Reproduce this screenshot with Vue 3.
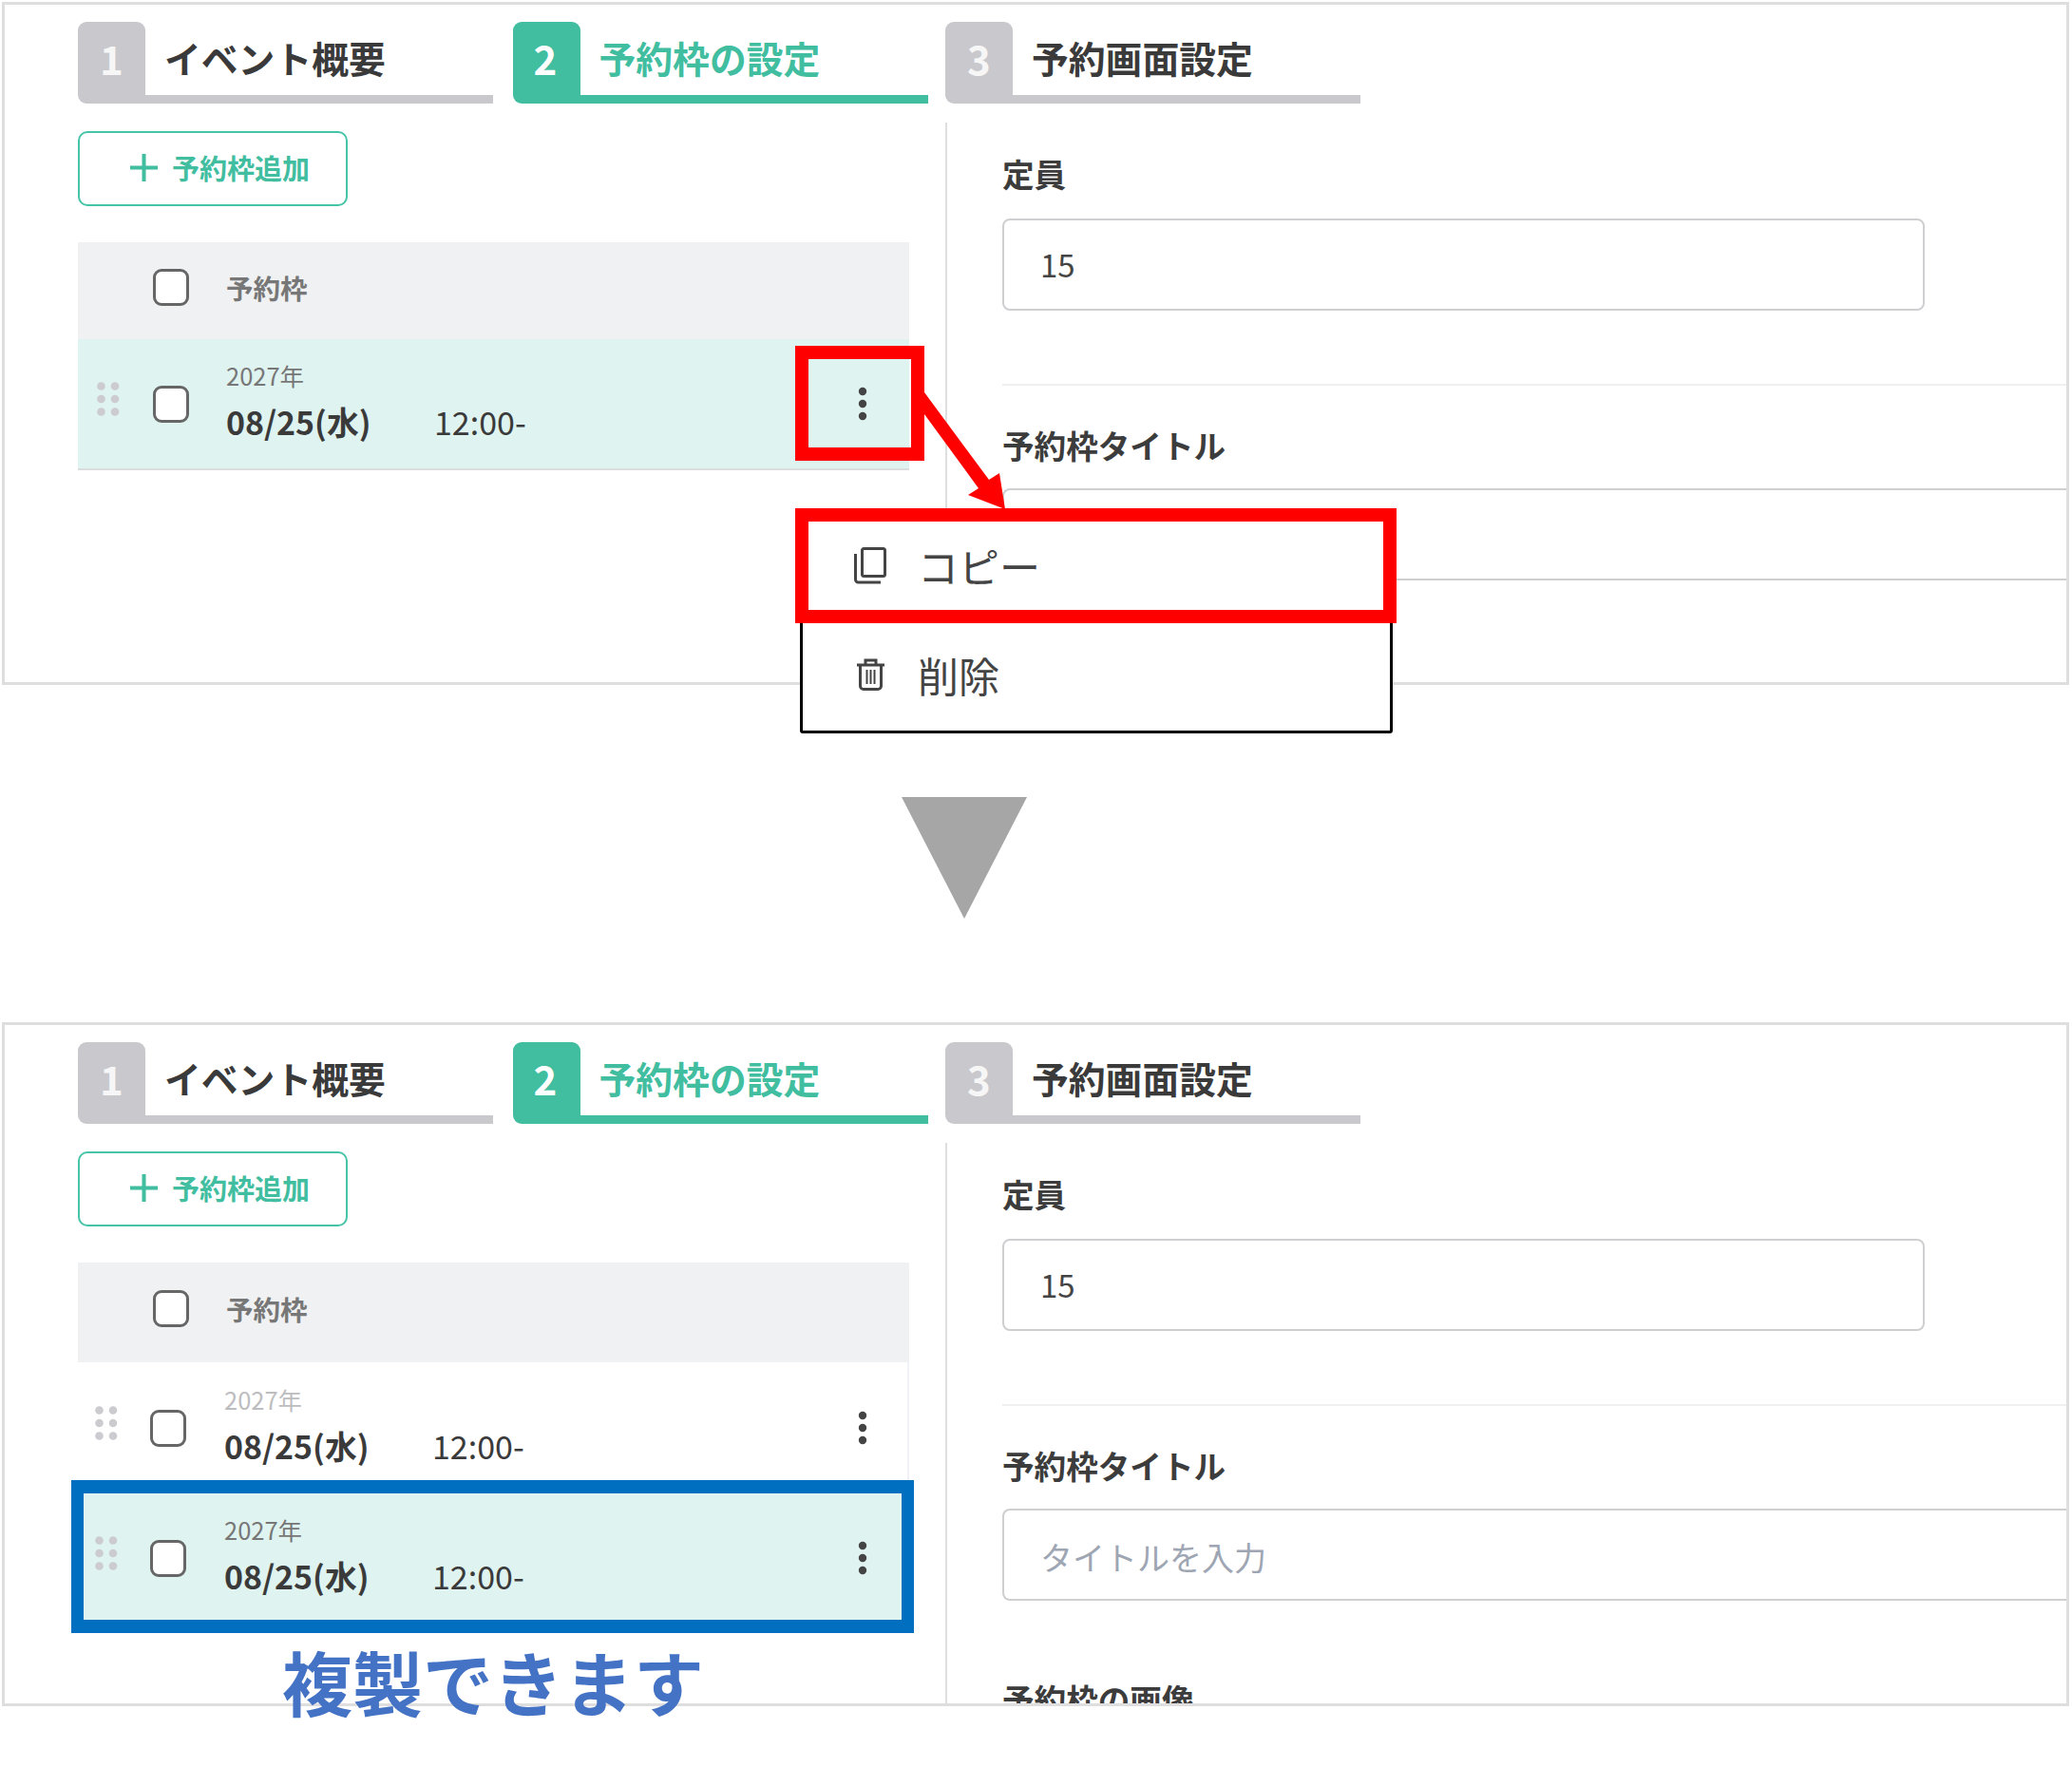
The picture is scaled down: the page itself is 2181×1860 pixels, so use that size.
<script setup>
const tabs = [
  { no: 1, title: 'イベント概要' },
  { no: 2, title: '予約枠の設定', active: true },
  { no: 3, title: '予約画面設定' }
]
const panels = [
  { id: 'before', tall: false, rows: [{ id: 'a', selected: true, faded: false }] },
  { id: 'after', tall: true, rows: [{ id: 'b', selected: false, faded: true }, { id: 'c', selected: true, faded: false }] }
]
const dots = [[4.500, 4.500], [19, 4.500], [4.500, 18], [19, 18], [4.500, 31.500], [19, 31.500]]
</script>

<template>
  <div class="page">
    <section v-for="panel in panels" :key="panel.id" class="panel" :class="{ tall: panel.tall }">
      <nav class="tabs">
        <div v-for="tab in tabs" :key="tab.no" class="tab" :class="{ active: tab.active }">
          <span class="num">{{ tab.no }}</span>
          <span class="tab-title">{{ tab.title }}</span>
        </div>
      </nav>
      <div class="body">
        <div class="left">
          <button class="add" type="button">
            <svg class="plus" width="29" height="29" viewBox="0 0 29 29"><path d="M14.500 0v29M0 14.500h29" stroke="#41bda0" stroke-width="4" fill="none" /></svg>
            <span>予約枠追加</span>
          </button>
          <div class="thead" :class="{ tall: panel.tall }">
            <span class="check"></span>
            <span class="thead-label">予約枠</span>
          </div>
          <div
            v-for="row in panel.rows"
            :key="row.id"
            class="row"
            :class="{ selected: row.selected, shifted: panel.tall, plain: !row.selected }"
          >
            <svg class="handle" width="24" height="36" viewBox="0 0 24 36">
              <circle v-for="(d, i) in dots" :key="i" :cx="d[0]" :cy="d[1]" r="4.300" fill="#cbcbd0" />
            </svg>
            <span class="check"></span>
            <div class="when">
              <div class="year" :class="{ faded: row.faded }">2027年</div>
              <div class="slot"><b class="date">08/25(水)</b><span class="time">12:00-</span></div>
            </div>
            <svg class="kebab" width="10" height="36" viewBox="0 0 10 36">
              <circle cx="5" cy="5" r="4.200" fill="#444" /><circle cx="5" cy="18" r="4.200" fill="#444" /><circle cx="5" cy="31" r="4.200" fill="#444" />
            </svg>
          </div>
        </div>
        <div class="right">
          <h3 class="label">定員</h3>
          <div class="input short">15</div>
          <hr class="rule" />
          <h3 class="label second">予約枠タイトル</h3>
          <div class="input wide placeholder">タイトルを入力</div>
          <h3 v-if="panel.tall" class="label third">予約枠の画像</h3>
        </div>
      </div>
    </section>

    <!-- annotations laid over the screenshots -->
    <div class="menu">
      <div class="menu-item copy">
        <svg width="34" height="39" viewBox="0 0 34 39" fill="none" stroke="#444" stroke-width="3">
          <rect x="8.500" y="1.500" width="24" height="29" rx="2" />
          <path d="M1.500 7v27a3 3 0 0 0 3 3H28" />
        </svg>
        <span>コピー</span>
      </div>
      <div class="menu-item del">
        <svg width="29" height="34" viewBox="0 0 29 34" fill="none" stroke="#444" stroke-width="3">
          <path d="M0 7h29M9 7V2h11v5M3.500 7v22a3.500 3.500 0 0 0 3.500 3.500h15a3.500 3.500 0 0 0 3.500-3.500V7" />
          <path d="M10.500 12v15M14.500 12v15M18.500 12v15" stroke-width="2" />
        </svg>
        <span>削除</span>
      </div>
    </div>
    <div class="red-box kebab-box"></div>
    <svg class="arrow" width="100" height="130" viewBox="0 0 100 130">
      <polygon points="0,2 0,25 57,103 46,110 85,125 79,87 68,94" fill="#ff0000" />
    </svg>
    <div class="red-box copy-box"></div>
    <svg class="triangle" width="132" height="128" viewBox="0 0 132 128"><polygon points="0,0 132,0 66,128" fill="#a6a6a6" /></svg>
    <div class="blue-box"></div>
    <div class="caption">複製できます</div>
  </div>
</template>

<style scoped>
.page {
  position: relative;
  width: 2181px;
  height: 1860px;
  padding-top: 2px;
  box-sizing: border-box;
  overflow: hidden;
  background: #fff;
  color: #444;
  font-family: "Noto Sans CJK JP", "Noto Sans", sans-serif;
}
.panel {
  box-sizing: border-box;
  width: 2176px;
  height: 719px;
  margin-left: 2px;
  border: 3px solid #dedede;
  padding: 18px 0 0 77px;
  overflow: hidden;
}
.panel.tall { height: 720px; margin-top: 355px; }

.tabs { display: flex; gap: 19.500px; }
.tab { display: flex; width: 437px; height: 86px; }
.tab.active { margin: 0 -1px 0 1px; }
.num {
  width: 71px;
  flex: none;
  border-radius: 9px 9px 0 9px;
  background: #c8c8cd;
  color: #f6f6f6;
  font-size: 42px;
  font-weight: 700;
  line-height: 75px;
  text-align: center;
}
.tab.active .num { padding-right: 2px; width: 69px; }
.tab-title {
  flex: 1;
  padding-left: 20px;
  border-bottom: 9px solid #c8c8cd;
  color: #3a3a3a;
  font-size: 38.800px;
  font-weight: 700;
  line-height: 75px;
  white-space: nowrap;
}
.tab.active .num { background: #41bda0; color: #fff; }
.tab.active .tab-title { border-color: #41bda0; color: #41bda0; }

.body { display: flex; margin-top: 20px; height: 700px; }
.left { width: 875px; margin-right: 38px; padding-top: 9px; flex: none; }
.add {
  display: flex;
  align-items: center;
  gap: 15px;
  box-sizing: border-box;
  width: 284px;
  height: 79px;
  padding: 0 0 2px 53px;
  border: 2px solid #45c4a7;
  border-radius: 10px;
  background: #fff;
  color: #41bda0;
  font: 700 29px/1 "Noto Sans CJK JP", sans-serif;
  white-space: nowrap;
}
.plus { flex: none; }
.thead {
  display: flex;
  align-items: center;
  box-sizing: border-box;
  height: 102px;
  margin-top: 38px;
  padding: 0 0 7px 79px;
  background: #f0f1f3;
}
.thead.tall { height: 105px; padding-bottom: 9px; }
.thead-label { margin-left: 39px; color: #777; font-size: 28.500px; font-weight: 700; }
.check {
  flex: none;
  box-sizing: border-box;
  width: 38px;
  height: 39px;
  border: 3px solid #666;
  border-radius: 9px;
  background: #fff;
}
.row {
  display: flex;
  align-items: center;
  box-sizing: border-box;
  height: 138px;
  padding: 0 44px 0 20px;
  border-bottom: 2px solid #dcdcde;
}
.row.selected { background: #dff3f0; }
.row.plain { height: 138px; padding-right: 42px; border-bottom: 0; border-right: 2px solid #f0f2f5; }
.row.shifted { padding-left: 18px; }
.handle { flex: none; margin: -11px 35px 0 0; }
.row.shifted .handle { margin-right: 34px; }
.when { margin: -12px 0 0 39px; white-space: nowrap; }
.row.shifted .when { margin-left: 40px; }
.year { color: #777; font-size: 25.500px; line-height: 38px; }
.year.faded { color: #bdbdc0; }
.slot { display: flex; align-items: baseline; margin-top: 11px; line-height: 38px; color: #3a3a3a; }
.date { width: 219px; font-size: 33.900px; font-weight: 700; }
.time { font-size: 34px; }
.kebab { flex: none; margin-left: auto; }

.right { flex: 1; padding: 34px 0 0 58px; border-left: 2px solid #dedede; }
.label { margin: 0; color: #3c3c3c; font-size: 33.600px; font-weight: 700; line-height: 40px; white-space: nowrap; }
.second { margin-top: 43px; }
.third { margin-top: 84px; }
.input {
  box-sizing: border-box;
  height: 97px;
  margin-top: 27px;
  padding-left: 38px;
  border: 2px solid #cfcfd2;
  border-radius: 8px;
  font-size: 33px;
  line-height: 93px;
  white-space: nowrap;
}
.short { width: 971px; }
.wide { margin-top: 25px; border-right: 0; border-radius: 8px 0 0 8px; }
.placeholder { color: #9ea5b3; font-size: 34px; line-height: 97px; }
.rule { height: 2px; margin: 77px 0 0; border: 0; background: #f0f0f0; }

.menu {
  position: absolute;
  left: 842px;
  top: 540px;
  box-sizing: border-box;
  width: 624px;
  height: 232px;
  border: 3px solid #000;
  border-radius: 0 0 3px 3px;
  background: #fff;
}
.menu-item {
  position: absolute;
  display: flex;
  align-items: center;
  color: #444;
  font-size: 43px;
  line-height: 56px;
}
.menu-item.copy { left: 54px; top: 24px; gap: 33px; }
.menu-item.del { left: 57px; top: 139px; gap: 35px; }
.red-box { position: absolute; box-sizing: border-box; border: 14px solid #ff0000; }
.kebab-box { left: 837px; top: 364px; width: 136px; height: 121px; }
.copy-box { left: 837px; top: 535px; width: 633px; height: 121px; }
.arrow { position: absolute; left: 973px; top: 411px; }
.triangle { position: absolute; left: 949px; top: 839px; }
.blue-box {
  position: absolute;
  left: 75px;
  top: 1558px;
  box-sizing: border-box;
  width: 887px;
  height: 161px;
  border: solid #006fc0;
  border-width: 14px 13.500px;
}
.caption {
  position: absolute;
  left: 297px;
  top: 1719px;
  color: #4472c4;
  font-size: 74px;
  font-weight: 700;
  line-height: 100px;
  white-space: nowrap;
}
</style>
